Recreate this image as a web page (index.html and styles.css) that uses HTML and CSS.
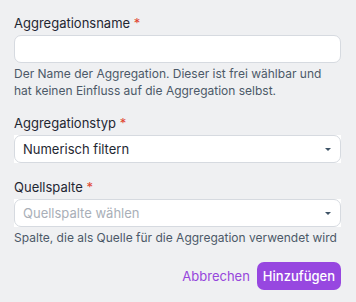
FILE: index.html
```html
<!DOCTYPE html>
<html>

<head>
    <title>Aggregation hinzufügen</title>
    <link rel="stylesheet" href="styles.css">
</head>

<body>
    <form class="agg-form">
        <div class="field">
            <label class="label">Aggregationsname <span class="req">*</span></label>
            <input class="input" type="text">
            <p class="help">Der Name der Aggregation. Dieser ist frei wählbar und hat keinen Einfluss auf die Aggregation selbst.</p>
        </div>
        <div class="field">
            <label class="label">Aggregationstyp <span class="req">*</span></label>
            <div class="select-wrap">
                <div class="select">
                    <span class="value">Numerisch filtern</span>
                    <svg class="caret" width="6" height="3" viewBox="0 0 6 3"><path d="M0 0h6L3 3z" /></svg>
                </div>
            </div>
        </div>
        <div class="field">
            <label class="label">Quellspalte <span class="req">*</span></label>
            <div class="select-wrap">
                <div class="select">
                    <span class="value placeholder">Quellspalte wählen</span>
                    <svg class="caret" width="6" height="3" viewBox="0 0 6 3"><path d="M0 0h6L3 3z" /></svg>
                </div>
            </div>
            <p class="help">Spalte, die als Quelle für die Aggregation verwendet wird</p>
        </div>
        <div class="actions">
            <button type="button" class="btn-link">Abbrechen</button>
            <button type="button" class="btn-primary">Hinzufügen</button>
        </div>
    </form>
</body>

</html>
```

FILE: styles.css
```css
body {
    margin: 0;
    padding: 14px 15px 0 14px;
    background-color: #eff0f2;
    font-family: Inter, "Noto Sans", sans-serif;
    color: #1f2732;
}

.agg-form {
    display: flex;
    flex-direction: column;
}

.field {
    display: flex;
    flex-direction: column;
    margin-bottom: 15px;
}

.label {
    font-size: 13px;
    line-height: 18px;
    margin-bottom: 3px;
}

.req {
    color: #e0452f;
}

.input,
.select {
    box-sizing: border-box;
    height: 28px;
    width: 100%;
    background-color: #fff;
    border: 1px solid #d6dae0;
    border-radius: 7px;
    font-family: inherit;
    font-size: 13px;
}

.input {
    outline: none;
}

.select-wrap {
    background-color: #fff;
}

.select {
    display: flex;
    align-items: center;
    justify-content: space-between;
    padding: 0 9px 0 8px;
}

.value {
    color: #1f2732;
}

.placeholder {
    color: #a9afb8;
}

.caret {
    fill: #3f5467;
}

.help {
    margin: 2px 0 0;
    font-size: 12px;
    line-height: 17px;
    color: #4c5968;
}

.actions {
    display: flex;
    justify-content: flex-end;
    align-items: center;
    gap: 7px;
    margin-top: 1px;
}

.btn-link {
    border: none;
    background: none;
    padding: 0;
    font-family: inherit;
    font-size: 13px;
    color: #9646dc;
}

.btn-primary {
    height: 28px;
    padding: 0 6px;
    border: none;
    border-radius: 7px;
    background-color: #9747e0;
    color: #fff;
    font-family: inherit;
    font-size: 13px;
    font-weight: 500;
}
```
